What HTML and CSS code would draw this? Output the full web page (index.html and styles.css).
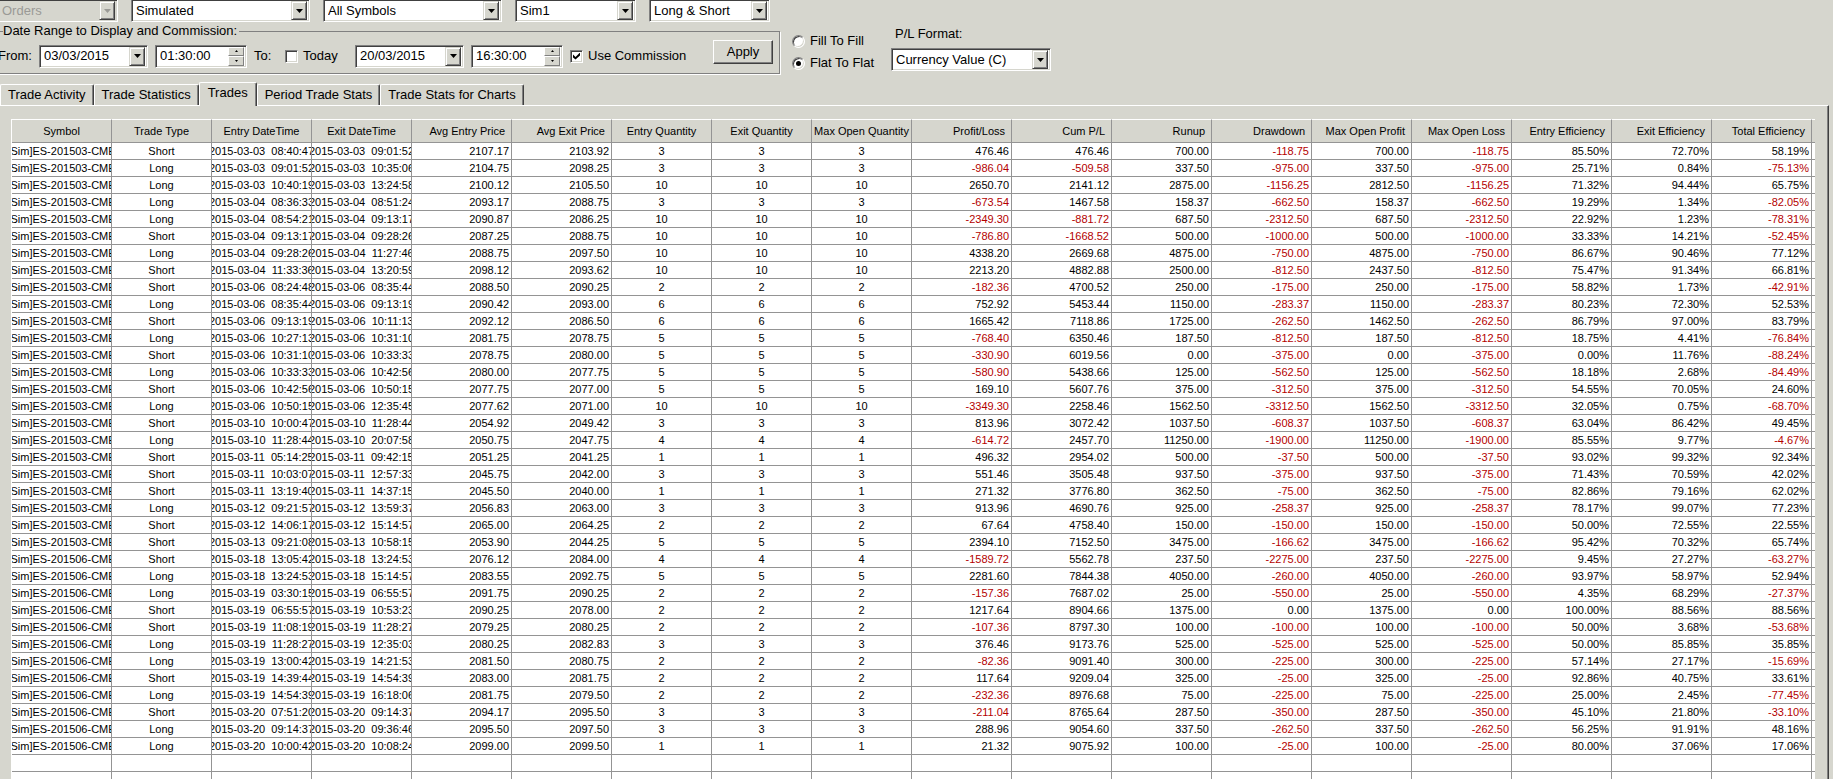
FILE: index.html
```html
<!DOCTYPE html>
<html lang="en">
<head>
  <meta charset="UTF-8" />
  <title>Trade Activity Log</title>
  <link rel="stylesheet" href="styles.css">
</head>
<body>

  <!-- Filters -->
  <div class="filters">
    <div class="combo combo-orders">
      <select id="logType" aria-label="Log type" disabled><option>Orders</option></select>
      <span class="drop off"><svg viewBox="0 0 7 4"><path d="M0 0h7L3.5 4z"/></svg></span>
    </div>
    <div class="combo combo-wide">
      <select id="mode" aria-label="Mode"><option>Simulated</option></select>
      <span class="drop"><svg viewBox="0 0 7 4"><path d="M0 0h7L3.5 4z"/></svg></span>
    </div>
    <div class="combo combo-wide">
      <select id="symbols" aria-label="Symbols"><option>All Symbols</option></select>
      <span class="drop"><svg viewBox="0 0 7 4"><path d="M0 0h7L3.5 4z"/></svg></span>
    </div>
    <div class="combo combo-small">
      <select id="account" aria-label="Account"><option>Sim1</option></select>
      <span class="drop"><svg viewBox="0 0 7 4"><path d="M0 0h7L3.5 4z"/></svg></span>
    </div>
    <div class="combo combo-small">
      <select id="side" aria-label="Side"><option>Long &amp; Short</option></select>
      <span class="drop"><svg viewBox="0 0 7 4"><path d="M0 0h7L3.5 4z"/></svg></span>
    </div>
  </div>

  <!-- Date range, fill mode and P/L format -->
  <div class="options">
    <fieldset class="range">
      <legend>Date Range to Display and Commission:</legend>
      <div class="range-row">
        <label class="from" for="fromDate">From:</label>
        <div class="field date">
          <input type="text" id="fromDate" value="03/03/2015">
          <button class="drop" aria-label="Pick start date"><svg viewBox="0 0 7 4"><path d="M0 0h7L3.5 4z"/></svg></button>
        </div>
        <div class="field time">
          <input type="text" id="fromTime" aria-label="Start time" value="01:30:00">
          <div class="spin">
            <button aria-label="Later"><svg viewBox="0 0 3 2"><path d="M0 2h3L1.5 0z"/></svg></button>
            <button aria-label="Earlier"><svg viewBox="0 0 3 2"><path d="M0 0h3L1.5 2z"/></svg></button>
          </div>
        </div>
        <label class="to" for="toDate">To:</label>
        <label class="check today"><input type="checkbox" id="today"> Today</label>
        <div class="field date">
          <input type="text" id="toDate" value="20/03/2015">
          <button class="drop" aria-label="Pick end date"><svg viewBox="0 0 7 4"><path d="M0 0h7L3.5 4z"/></svg></button>
        </div>
        <div class="field time">
          <input type="text" id="toTime" aria-label="End time" value="16:30:00">
          <div class="spin">
            <button aria-label="Later"><svg viewBox="0 0 3 2"><path d="M0 2h3L1.5 0z"/></svg></button>
            <button aria-label="Earlier"><svg viewBox="0 0 3 2"><path d="M0 0h3L1.5 2z"/></svg></button>
          </div>
        </div>
        <label class="check"><input type="checkbox" id="commission" checked> Use Commission</label>
        <button class="apply" id="applyBtn">Apply</button>
      </div>
    </fieldset>

    <div class="fill-mode">
      <label class="check"><input type="radio" name="fill" value="fill"> Fill To Fill</label>
      <label class="check"><input type="radio" name="fill" value="flat" checked> Flat To Flat</label>
    </div>

    <div class="format">
      <label for="plFormat">P/L Format:</label>
      <div class="combo combo-format">
        <select id="plFormat"><option>Currency Value (C)</option></select>
        <span class="drop"><svg viewBox="0 0 7 4"><path d="M0 0h7L3.5 4z"/></svg></span>
      </div>
    </div>
  </div>

  <!-- Tabs -->
  <div class="tabs" role="tablist">
    <button class="tab" role="tab">Trade Activity</button>
    <button class="tab" role="tab">Trade Statistics</button>
    <button class="tab active" role="tab" aria-selected="true">Trades</button>
    <button class="tab" role="tab">Period Trade Stats</button>
    <button class="tab" role="tab">Trade Stats for Charts</button>
  </div>

  <div class="panel">
    <div class="grid">
      <table>
        <thead>
          <tr>
            <th class="mid">Symbol</th>
            <th class="mid">Trade Type</th>
            <th class="mid">Entry DateTime</th>
            <th class="mid">Exit DateTime</th>
            <th>Avg Entry Price</th>
            <th>Avg Exit Price</th>
            <th class="mid">Entry Quantity</th>
            <th class="mid">Exit Quantity</th>
            <th class="mid">Max Open Quantity</th>
            <th>Profit/Loss</th>
            <th>Cum P/L</th>
            <th>Runup</th>
            <th>Drawdown</th>
            <th>Max Open Profit</th>
            <th>Max Open Loss</th>
            <th>Entry Efficiency</th>
            <th>Exit Efficiency</th>
            <th>Total Efficiency</th>
            <th class="rest"></th>
          </tr>
        </thead>
        <tbody id="trades"></tbody>
      </table>
    </div>
  </div>

  <script src="trades.js"></script>
</body>
</html>
```
FILE: styles.css
```css
* {
  box-sizing: border-box;
}

body {
  margin: 0;
  height: 100vh;
  display: flex;
  flex-direction: column;
  overflow: hidden;
  background: #d6d6ce;
  color: #000;
  font-family: "Liberation Sans", Arial, sans-serif;
  font-size: 13px;
  line-height: 16px;
}

button, input, select {
  margin: 0;
  font: inherit;
  color: inherit;
}

svg {
  display: block;
  fill: currentColor;
}

/* Sunken boxes: drop-downs, dates and times */
.combo, .field {
  height: 23px;
  background: #fff;
  border: 1px solid;
  border-color: #808080 #fff #fff #808080;
  box-shadow: inset 1px 1px #404040, inset -1px -1px #d6d6ce;
  padding: 2px;
}

.combo {
  display: grid;
}

.combo select {
  grid-area: 1 / 1;
  appearance: none;
  border: 0;
  padding: 0 2px;
  background: transparent;
  width: 100%;
  outline: none;
}

.combo select:disabled {
  color: #9a9a96;
  opacity: 1;
}

.combo .drop {
  grid-area: 1 / 1;
  justify-self: end;
  pointer-events: none;
}

.drop {
  width: 16px;
  height: 19px;
  margin: -1px 0;
  padding: 0;
  display: flex;
  align-items: center;
  justify-content: center;
  background: #d6d6ce;
  border: 1px solid;
  border-color: #d6d6ce #404040 #404040 #d6d6ce;
  box-shadow: inset 1px 1px #fff, inset -1px -1px #808080;
}

.drop svg {
  width: 7px;
  height: 4px;
}

.drop.off {
  color: #9a9a96;
}

/* Filters */
.filters {
  display: flex;
  gap: 13px;
  margin: -1px 0 0 -3px;
}

.combo-orders {
  width: 121px;
  background: #d6d6ce;
}

.combo-wide {
  width: 179px;
}

.combo-small {
  width: 121px;
}

/* Date range */
.options {
  display: flex;
  align-items: flex-start;
  margin: 1px 0 0 -3px;
}

.range {
  width: 783px;
  margin: 0;
  padding: 5px 6px 5px 0;
  border: 1px solid #808080;
  box-shadow: 1px 1px #fff;
}

.range legend {
  margin-left: 5px;
  padding: 0 2px 0 0;
}

.range-row {
  display: flex;
  align-items: center;
}

.from {
  width: 41px;
}

.field {
  display: flex;
}

.field input {
  flex: 1;
  min-width: 0;
  border: 0;
  padding: 0 2px;
  background: transparent;
  outline: none;
}

.date {
  width: 109px;
  margin-right: 7px;
}

.time {
  width: 92px;
  margin-right: 7px;
}

.spin {
  width: 16px;
  display: flex;
  flex-direction: column;
  margin: -1px 0;
}

.spin button {
  flex: 1;
  padding: 0;
  display: flex;
  align-items: center;
  justify-content: center;
  background: #d6d6ce;
  border: 1px solid;
  border-color: #fff #808080 #808080 #fff;
}

.spin svg {
  width: 3px;
  height: 2px;
}

.to {
  width: 31px;
}

.check {
  display: flex;
  align-items: center;
  gap: 5px;
  white-space: nowrap;
}

.today {
  width: 70px;
}

.check input {
  appearance: none;
  width: 13px;
  height: 13px;
  background: #fff;
  border: 1px solid;
  border-color: #808080 #fff #fff #808080;
  box-shadow: inset 1px 1px #404040, inset -1px -1px #d6d6ce;
  display: grid;
  place-items: center;
}

.check input[type="checkbox"]:checked::before {
  content: "";
  width: 7px;
  height: 7px;
  background: #000;
  clip-path: polygon(0 29%, 36% 64%, 100% 0, 100% 43%, 36% 100%, 0 71%);
}

.check input[type="radio"] {
  border-radius: 50%;
}

.check input[type="radio"]:checked::before {
  content: "";
  width: 5px;
  height: 5px;
  border-radius: 50%;
  background: #000;
}

.apply {
  width: 60px;
  height: 24px;
  margin: -4px 0 4px auto;
  padding: 0;
  background: #d6d6ce;
  border: 1px solid;
  border-color: #fff #404040 #404040 #fff;
  box-shadow: inset -1px -1px #808080;
}

.fill-mode {
  display: flex;
  flex-direction: column;
  gap: 6px;
  margin: 10px 0 0 12px;
  width: 99px;
}

.format {
  padding-top: 3px;
}

.format label {
  display: block;
  margin: 0 0 6px 4px;
}

.combo-format {
  width: 160px;
}

/* Tabs */
.tabs {
  display: flex;
  align-items: flex-end;
  margin-top: 8px;
}

.tab {
  height: 21px;
  padding: 0 7px;
  background: #d6d6ce;
  border: 1px solid;
  border-color: #fff #404040 transparent #fff;
  border-bottom: 0;
  border-radius: 2px 2px 0 0;
  box-shadow: inset -1px 0 #808080;
}

.tab.active {
  height: 24px;
  margin-bottom: -1px;
  padding: 0 8px 3px;
  z-index: 1;
}

/* Trades grid */
.panel {
  flex: 1;
  min-height: 0;
  display: flex;
  margin-right: 4px;
  padding: 13px 13px 0 11px;
  border-top: 1px solid #fff;
  border-right: 1px solid #404040;
  box-shadow: inset -1px 0 #808080;
}

.grid {
  flex: 1;
  min-width: 0;
  overflow: hidden;
  background: #fff;
  border-left: 1px solid #fff;
}

table {
  width: 100%;
  table-layout: fixed;
  border-collapse: separate;
  border-spacing: 0;
  font-size: 11px;
  line-height: 16px;
}

th, td {
  padding: 0 2px;
  border: 0 solid #949494;
  border-width: 0 1px 1px 0;
  text-align: right;
  white-space: nowrap;
  overflow: hidden;
}

th {
  height: 24px;
  padding: 0 6px;
  background: #d6d6ce;
  border-top: 1px solid #fff;
  font-weight: normal;
}

td {
  height: 17px;
}

th.mid, td.mid {
  padding: 0;
  text-align: center;
}

th.rest, td.rest {
  width: 3px;
  padding: 0;
  border-right: 0;
}

/* Text wider than its column is cut on both sides */
.clip {
  display: flex;
  justify-content: center;
  overflow: hidden;
  white-space: pre;
}

.neg {
  color: #b40000;
}
```
FILE: trades.js
```javascript
// symbol month, type, entry, exit, avg entry, avg exit, quantity, P/L, cum P/L,
// runup, drawdown, max open profit, max open loss, entry / exit / total efficiency
const TRADES = `
03 Short 2015-03-03 08:40:47 2015-03-03 09:01:52 2107.17 2103.92 3 476.46 476.46 700.00 -118.75 700.00 -118.75 85.50 72.70 58.19
03 Long 2015-03-03 09:01:52 2015-03-03 10:35:06 2104.75 2098.25 3 -986.04 -509.58 337.50 -975.00 337.50 -975.00 25.71 0.84 -75.13
03 Long 2015-03-03 10:40:19 2015-03-03 13:24:58 2100.12 2105.50 10 2650.70 2141.12 2875.00 -1156.25 2812.50 -1156.25 71.32 94.44 65.75
03 Long 2015-03-04 08:36:33 2015-03-04 08:51:24 2093.17 2088.75 3 -673.54 1467.58 158.37 -662.50 158.37 -662.50 19.29 1.34 -82.05
03 Long 2015-03-04 08:54:21 2015-03-04 09:13:17 2090.87 2086.25 10 -2349.30 -881.72 687.50 -2312.50 687.50 -2312.50 22.92 1.23 -78.31
03 Short 2015-03-04 09:13:17 2015-03-04 09:28:26 2087.25 2088.75 10 -786.80 -1668.52 500.00 -1000.00 500.00 -1000.00 33.33 14.21 -52.45
03 Long 2015-03-04 09:28:26 2015-03-04 11:27:46 2088.75 2097.50 10 4338.20 2669.68 4875.00 -750.00 4875.00 -750.00 86.67 90.46 77.12
03 Short 2015-03-04 11:33:36 2015-03-04 13:20:59 2098.12 2093.62 10 2213.20 4882.88 2500.00 -812.50 2437.50 -812.50 75.47 91.34 66.81
03 Short 2015-03-06 08:24:48 2015-03-06 08:35:44 2088.50 2090.25 2 -182.36 4700.52 250.00 -175.00 250.00 -175.00 58.82 1.73 -42.91
03 Long 2015-03-06 08:35:44 2015-03-06 09:13:19 2090.42 2093.00 6 752.92 5453.44 1150.00 -283.37 1150.00 -283.37 80.23 72.30 52.53
03 Short 2015-03-06 09:13:19 2015-03-06 10:11:13 2092.12 2086.50 6 1665.42 7118.86 1725.00 -262.50 1462.50 -262.50 86.79 97.00 83.79
03 Long 2015-03-06 10:27:13 2015-03-06 10:31:10 2081.75 2078.75 5 -768.40 6350.46 187.50 -812.50 187.50 -812.50 18.75 4.41 -76.84
03 Short 2015-03-06 10:31:10 2015-03-06 10:33:33 2078.75 2080.00 5 -330.90 6019.56 0.00 -375.00 0.00 -375.00 0.00 11.76 -88.24
03 Long 2015-03-06 10:33:33 2015-03-06 10:42:56 2080.00 2077.75 5 -580.90 5438.66 125.00 -562.50 125.00 -562.50 18.18 2.68 -84.49
03 Short 2015-03-06 10:42:56 2015-03-06 10:50:15 2077.75 2077.00 5 169.10 5607.76 375.00 -312.50 375.00 -312.50 54.55 70.05 24.60
03 Long 2015-03-06 10:50:15 2015-03-06 12:35:45 2077.62 2071.00 10 -3349.30 2258.46 1562.50 -3312.50 1562.50 -3312.50 32.05 0.75 -68.70
03 Short 2015-03-10 10:00:47 2015-03-10 11:28:44 2054.92 2049.42 3 813.96 3072.42 1037.50 -608.37 1037.50 -608.37 63.04 86.42 49.45
03 Long 2015-03-10 11:28:44 2015-03-10 20:07:58 2050.75 2047.75 4 -614.72 2457.70 11250.00 -1900.00 11250.00 -1900.00 85.55 9.77 -4.67
03 Short 2015-03-11 05:14:25 2015-03-11 09:42:15 2051.25 2041.25 1 496.32 2954.02 500.00 -37.50 500.00 -37.50 93.02 99.32 92.34
03 Short 2015-03-11 10:03:07 2015-03-11 12:57:33 2045.75 2042.00 3 551.46 3505.48 937.50 -375.00 937.50 -375.00 71.43 70.59 42.02
03 Short 2015-03-11 13:19:40 2015-03-11 14:37:15 2045.50 2040.00 1 271.32 3776.80 362.50 -75.00 362.50 -75.00 82.86 79.16 62.02
03 Long 2015-03-12 09:21:57 2015-03-12 13:59:37 2056.83 2063.00 3 913.96 4690.76 925.00 -258.37 925.00 -258.37 78.17 99.07 77.23
03 Short 2015-03-12 14:06:17 2015-03-12 15:14:57 2065.00 2064.25 2 67.64 4758.40 150.00 -150.00 150.00 -150.00 50.00 72.55 22.55
03 Short 2015-03-13 09:21:08 2015-03-13 10:58:15 2053.90 2044.25 5 2394.10 7152.50 3475.00 -166.62 3475.00 -166.62 95.42 70.32 65.74
06 Short 2015-03-18 13:05:42 2015-03-18 13:24:53 2076.12 2084.00 4 -1589.72 5562.78 237.50 -2275.00 237.50 -2275.00 9.45 27.27 -63.27
06 Long 2015-03-18 13:24:53 2015-03-18 15:14:57 2083.55 2092.75 5 2281.60 7844.38 4050.00 -260.00 4050.00 -260.00 93.97 58.97 52.94
06 Long 2015-03-19 03:30:15 2015-03-19 06:55:57 2091.75 2090.25 2 -157.36 7687.02 25.00 -550.00 25.00 -550.00 4.35 68.29 -27.37
06 Short 2015-03-19 06:55:57 2015-03-19 10:53:23 2090.25 2078.00 2 1217.64 8904.66 1375.00 0.00 1375.00 0.00 100.00 88.56 88.56
06 Short 2015-03-19 11:08:19 2015-03-19 11:28:27 2079.25 2080.25 2 -107.36 8797.30 100.00 -100.00 100.00 -100.00 50.00 3.68 -53.68
06 Long 2015-03-19 11:28:27 2015-03-19 12:35:03 2080.25 2082.83 3 376.46 9173.76 525.00 -525.00 525.00 -525.00 50.00 85.85 35.85
06 Long 2015-03-19 13:00:42 2015-03-19 14:21:53 2081.50 2080.75 2 -82.36 9091.40 300.00 -225.00 300.00 -225.00 57.14 27.17 -15.69
06 Short 2015-03-19 14:39:44 2015-03-19 14:54:39 2083.00 2081.75 2 117.64 9209.04 325.00 -25.00 325.00 -25.00 92.86 40.75 33.61
06 Long 2015-03-19 14:54:39 2015-03-19 16:18:06 2081.75 2079.50 2 -232.36 8976.68 75.00 -225.00 75.00 -225.00 25.00 2.45 -77.45
06 Short 2015-03-20 07:51:20 2015-03-20 09:14:37 2094.17 2095.50 3 -211.04 8765.64 287.50 -350.00 287.50 -350.00 45.10 21.80 -33.10
06 Long 2015-03-20 09:14:37 2015-03-20 09:36:46 2095.50 2097.50 3 288.96 9054.60 337.50 -262.50 337.50 -262.50 56.25 91.91 48.16
06 Long 2015-03-20 10:00:42 2015-03-20 10:08:24 2099.00 2099.50 1 21.32 9075.92 100.00 -25.00 100.00 -25.00 80.00 37.06 17.06
`.trim().split('\n').map(line => line.split(' '));

const EMPTY_ROWS = 2;
const COLUMNS = 18;

const clip = text => `<td class="mid"><div class="clip">${text}</div></td>`;
const mid = text => `<td class="mid">${text}</td>`;
const num = (text, unit = '') =>
  `<td${text.startsWith('-') ? ' class="neg"' : ''}>${text}${unit}</td>`;

function tradeRow(t) {
  const [month, type, inDay, inTime, outDay, outTime, inPrice, outPrice, qty, ...rest] = t;
  return '<tr>' +
    clip(`[Sim]ES-2015${month}-CME`) +
    mid(type) +
    clip(`${inDay}  ${inTime}`) +
    clip(`${outDay}  ${outTime}`) +
    num(inPrice) + num(outPrice) +
    mid(qty) + mid(qty) + mid(qty) +
    rest.slice(0, 6).map(v => num(v)).join('') +
    rest.slice(6).map(v => num(v, '%')).join('') +
    '<td class="rest"></td></tr>';
}

const emptyRow = '<tr>' + '<td></td>'.repeat(COLUMNS) + '<td class="rest"></td></tr>';

document.getElementById('trades').innerHTML =
  TRADES.map(tradeRow).join('') + emptyRow.repeat(EMPTY_ROWS);
```
